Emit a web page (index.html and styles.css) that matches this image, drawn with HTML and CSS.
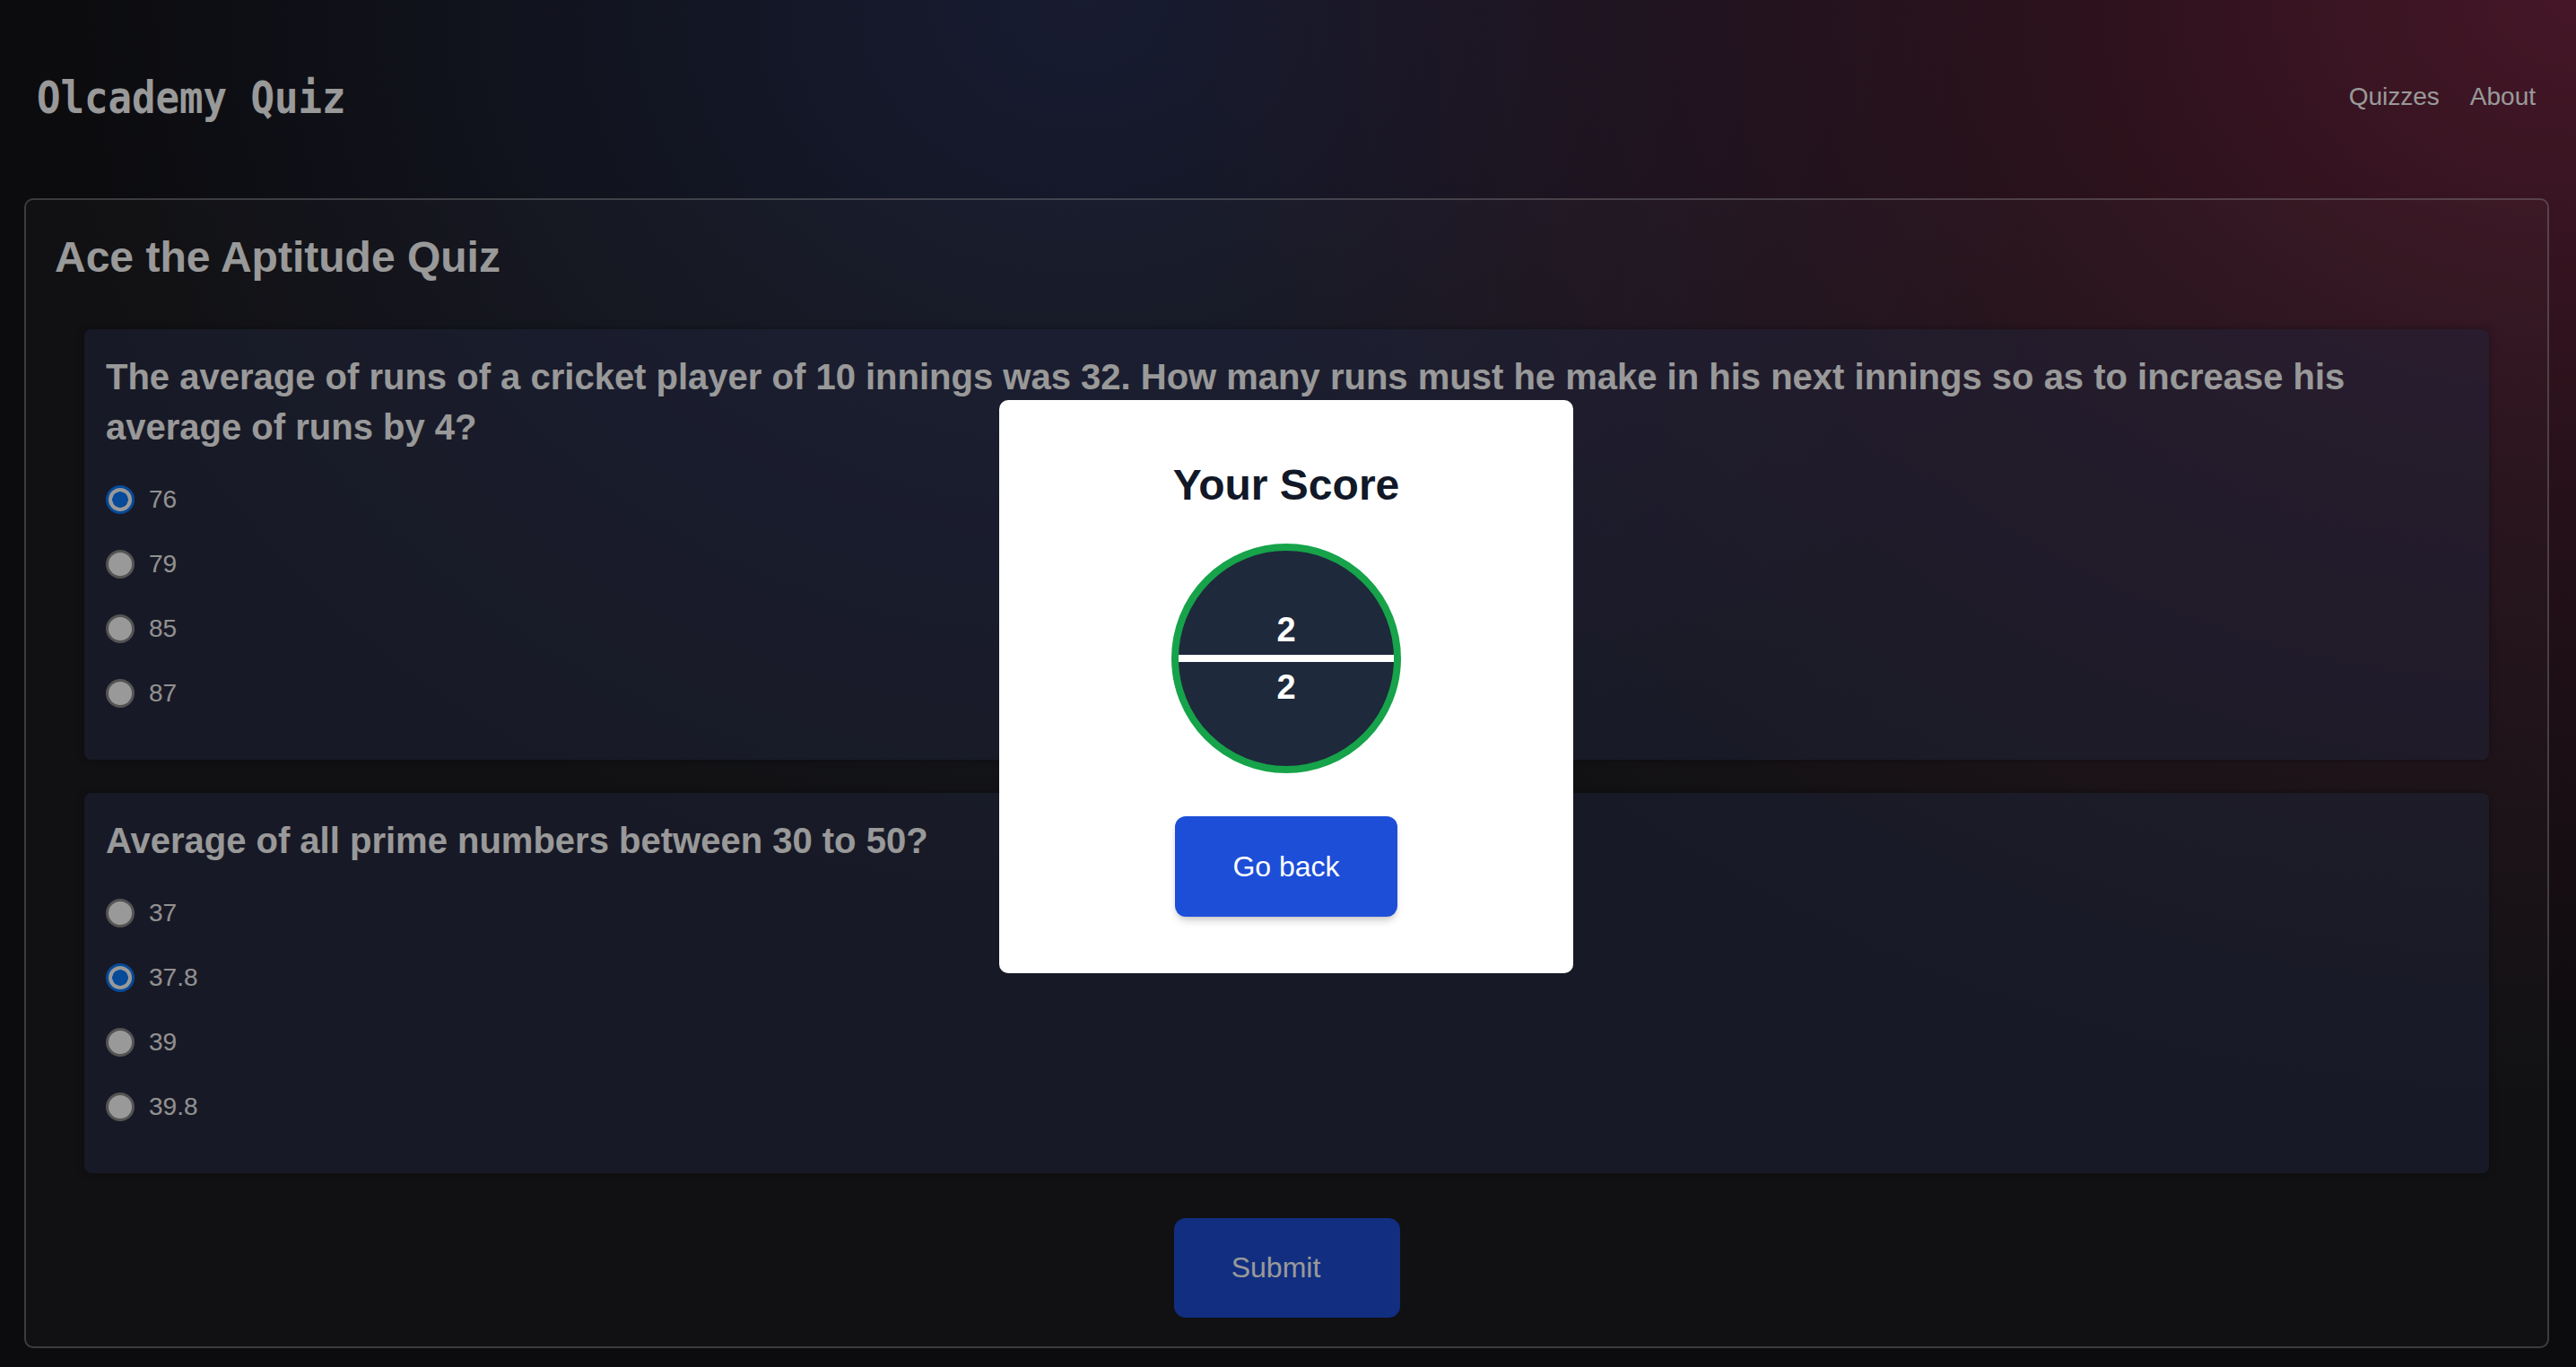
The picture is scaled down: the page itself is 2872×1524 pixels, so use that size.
FILE: index.html
```html
<!DOCTYPE html>
<html lang="en">
<head>
<meta charset="utf-8">
<title>Olcademy Quiz</title>
<link rel="stylesheet" href="styles.css">
</head>
<body>
<header class="site-header">
  <div class="logo">Olcademy Quiz</div>
  <nav class="nav">
    <a class="nav-link" href="#">Quizzes</a>
    <a class="nav-link" href="#">About</a>
  </nav>
</header>

<main class="quiz">
  <h1 class="quiz-title">Ace the Aptitude Quiz</h1>
  <div class="questions">
    <section class="question-card">
      <h2 class="question-text">The average of runs of a cricket player of 10 innings was 32. How many runs must he make in his next innings so as to increase his average of runs by 4?</h2>
      <div class="options">
        <label class="option"><input class="radio" type="radio" name="q1" checked><span class="option-label">76</span></label>
        <label class="option"><input class="radio" type="radio" name="q1"><span class="option-label">79</span></label>
        <label class="option"><input class="radio" type="radio" name="q1"><span class="option-label">85</span></label>
        <label class="option"><input class="radio" type="radio" name="q1"><span class="option-label">87</span></label>
      </div>
    </section>
    <section class="question-card">
      <h2 class="question-text">Average of all prime numbers between 30 to 50?</h2>
      <div class="options">
        <label class="option"><input class="radio" type="radio" name="q2"><span class="option-label">37</span></label>
        <label class="option"><input class="radio" type="radio" name="q2" checked><span class="option-label">37.8</span></label>
        <label class="option"><input class="radio" type="radio" name="q2"><span class="option-label">39</span></label>
        <label class="option"><input class="radio" type="radio" name="q2"><span class="option-label">39.8</span></label>
      </div>
    </section>
  </div>
  <div class="actions">
    <button class="submit-btn" type="button">Submit</button>
  </div>
</main>

<div class="backdrop">
  <div class="score-modal">
    <h2 class="score-title">Your Score</h2>
    <div class="score-circle">
      <span class="score-num">2</span>
      <span class="score-line"></span>
      <span class="score-num">2</span>
    </div>
    <button class="back-btn" type="button">Go back</button>
  </div>
</div>
</body>
</html>
```

FILE: styles.css
```css
* {
  box-sizing: border-box;
}

html,
body {
  margin: 0;
  height: 100%;
}

body {
  font-family: "Liberation Sans", Arial, Helvetica, sans-serif;
  color: #ffffff;
  overflow: hidden;
  background-color: #141418;
  background-image:
    radial-gradient(ellipse 55% 80% at 100% 0%, rgba(116, 38, 66, 1) 0%, rgba(116, 38, 66, 0.45) 45%, rgba(116, 38, 66, 0) 100%),
    radial-gradient(ellipse 40% 65% at 42% 0%, rgba(40, 47, 82, 1) 0%, rgba(40, 47, 82, 0) 100%),
    linear-gradient(to bottom, #141418 0%, #141418 100%);
}

/* Header */
.site-header {
  height: 216px;
  display: flex;
  align-items: center;
  justify-content: space-between;
  padding: 0 45px 0 41px;
}

.logo {
  font-family: "DejaVu Sans Mono", "Liberation Mono", monospace;
  font-weight: bold;
  font-size: 44px;
  transform: scaleY(1.12);
  color: #ffffff;
}

.nav {
  display: flex;
  gap: 34px;
}

.nav-link {
  font-size: 28px;
  color: #ffffff;
  text-decoration: none;
}

/* Quiz box */
.quiz {
  margin: 5px 30px 0 27px;
  border: 2px solid rgba(255, 255, 255, 0.32);
  border-radius: 10px;
  background: rgba(255, 255, 255, 0.04);
  padding: 32px;
}

.quiz-title {
  margin: 3px 0 51px;
  font-size: 48px;
  line-height: 1.2;
  font-weight: bold;
}

.questions {
  display: flex;
  flex-direction: column;
  gap: 37px;
  padding: 0 33px;
}

.question-card {
  background: rgba(52, 58, 95, 0.5);
  border-radius: 8px;
  padding: 25px 24px 38px;
  box-shadow: 0 0 8px rgba(0, 0, 0, 0.35);
}

.question-text {
  margin: 0 0 17px;
  font-size: 40px;
  line-height: 56px;
  font-weight: bold;
}

.options {
  display: flex;
  flex-direction: column;
}

.option {
  height: 72px;
  display: flex;
  align-items: center;
  gap: 16px;
}

.radio {
  appearance: none;
  -webkit-appearance: none;
  margin: 0;
  width: 32px;
  height: 32px;
  border-radius: 50%;
  background: #ffffff;
  border: 3px solid #8c8c8c;
  flex: none;
}

.radio:checked {
  border-color: #0a7cff;
  background: radial-gradient(circle, #0a7cff 0 8.5px, #ffffff 9px);
}

.option-label {
  font-size: 28px;
  color: #f2f2f2;
}

.actions {
  display: flex;
  justify-content: center;
  margin-top: 50px;
}

.submit-btn {
  width: 252px;
  height: 111px;
  border: none;
  border-radius: 13px;
  background: #1d4ed8;
  color: #ffffff;
  font-family: "Liberation Sans", Arial, sans-serif;
  font-size: 32px;
  padding: 0 24px 0 0;
}

/* Modal */
.backdrop {
  position: fixed;
  inset: 0;
  background: rgba(0, 0, 0, 0.4);
  display: flex;
  align-items: center;
  justify-content: center;
  padding: 7px 4px 0 0;
}

.score-modal {
  width: 640px;
  background: #ffffff;
  border-radius: 10px;
  padding: 71px 0 63px;
  display: flex;
  flex-direction: column;
  align-items: center;
}

.score-title {
  margin: 0 0 41px;
  font-size: 48px;
  line-height: 1;
  font-weight: bold;
  color: #111827;
}

.score-circle {
  width: 256px;
  height: 256px;
  border-radius: 50%;
  border: 8px solid #16a34a;
  background: #1e293b;
  display: flex;
  flex-direction: column;
  justify-content: center;
  margin-bottom: 48px;
}

.score-num {
  font-size: 38px;
  line-height: 40px;
  font-weight: bold;
  text-align: center;
  color: #ffffff;
}

.score-line {
  height: 8px;
  background: #ffffff;
  margin: 8px 0;
}

.back-btn {
  width: 248px;
  height: 112px;
  border: none;
  border-radius: 12px;
  background: #1d4ed8;
  color: #ffffff;
  font-family: "Liberation Sans", Arial, sans-serif;
  font-size: 32px;
  box-shadow: 0 6px 10px -2px rgba(0, 0, 0, 0.18), 0 3px 6px -3px rgba(0, 0, 0, 0.15);
}
```
